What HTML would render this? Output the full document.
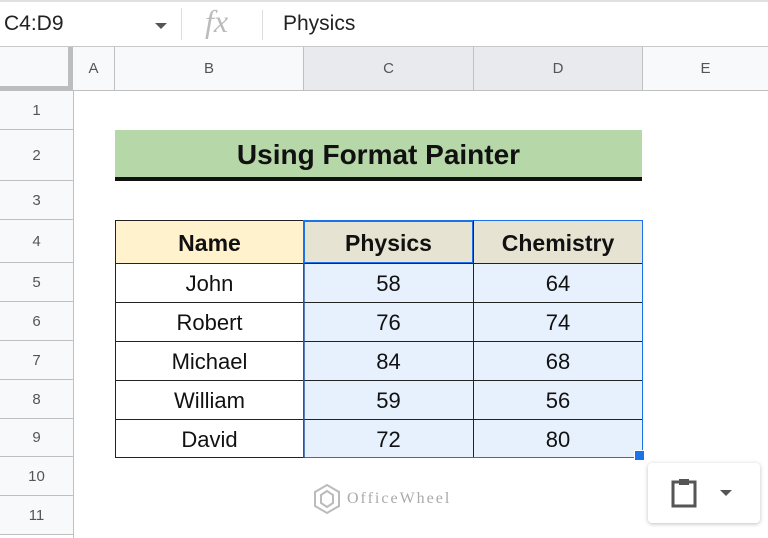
<!DOCTYPE html>
<html><head><style>
body{margin:0;width:768px;height:538px;overflow:hidden;background:#fff;font-family:"Liberation Sans",Arial,sans-serif;position:relative}
div{position:absolute;box-sizing:border-box}
.ch{top:47px;height:44px;background:#f8f9fa;border-right:1px solid #c0c0c0;border-bottom:1px solid #c0c0c0;text-align:center;line-height:44px;font-size:15px;color:#555}
.sel{background:#e8eaed}
.rh{left:0;width:73px;background:#f8f9fa;border-bottom:1px solid #c0c0c0;text-align:center;font-size:15px;color:#555}
.c{border:1px solid #222;text-align:center;font-size:22px;color:#111;margin:0}
</style></head><body>
<div style="left:0;top:0;width:768px;height:47px;border-top:2px solid #e0e0e0;border-bottom:1px solid #c8c8c8"></div>
<div style="left:4px;top:12px;font-size:21px;color:#222">C4:D9</div>
<div style="left:155px;top:23px;width:0;height:0;border-left:6px solid transparent;border-right:6px solid transparent;border-top:6px solid #555"></div>
<div style="left:181px;top:8px;width:1px;height:32px;background:#ddd"></div>
<div style="left:205px;top:3px;font-family:'Liberation Serif',serif;font-style:italic;font-size:32px;color:#bbb">fx</div>
<div style="left:262px;top:10px;width:1px;height:30px;background:#ddd"></div>
<div style="left:283px;top:12px;font-size:21px;color:#222">Physics</div>

<div style="left:0;top:47px;width:73px;height:44px;background:#f8f9fa;border-right:5px solid #bdbdbd;border-bottom:5px solid #bdbdbd"></div>
<div class="ch" style="left:73px;width:42px">A</div>
<div class="ch" style="left:115px;width:189px">B</div>
<div class="ch sel" style="left:304px;width:170px">C</div>
<div class="ch sel" style="left:474px;width:169px">D</div>
<div class="ch" style="left:643px;width:125px;border-right:none">E</div>
<div style="left:73px;top:91px;width:1px;height:447px;background:#c0c0c0"></div>

<div class="rh" style="top:91px;height:39px;line-height:39px">1</div>
<div class="rh" style="top:130px;height:51px;line-height:51px">2</div>
<div class="rh" style="top:181px;height:39px;line-height:39px">3</div>
<div class="rh sel" style="top:220px;height:43px;line-height:43px">4</div>
<div class="rh sel" style="top:263px;height:39px;line-height:39px">5</div>
<div class="rh sel" style="top:302px;height:39px;line-height:39px">6</div>
<div class="rh sel" style="top:341px;height:39px;line-height:39px">7</div>
<div class="rh sel" style="top:380px;height:39px;line-height:39px">8</div>
<div class="rh sel" style="top:419px;height:38px;line-height:38px">9</div>
<div class="rh" style="top:457px;height:39px;line-height:39px">10</div>
<div class="rh" style="top:496px;height:39px;line-height:39px">11</div>

<div style="left:115px;top:130px;width:527px;height:51px;background:#b6d7a8;border-bottom:4px solid #111;text-align:center;font-weight:bold;font-size:28px;line-height:50px;color:#111">Using Format Painter</div>

<div class="c" style="left:115px;top:220px;width:189px;height:44px;background:#fff2cc;font-weight:bold;line-height:44px;font-size:23px">Name</div>
<div class="c" style="left:303px;top:220px;width:171px;height:44px;background:#e6e3d2;font-weight:bold;line-height:42px;font-size:23px;border:2px solid #1a73e8">Physics</div>
<div class="c" style="left:473px;top:220px;width:170px;height:44px;background:#e6e3d2;font-weight:bold;line-height:44px;font-size:23px;border-right:1px solid #1a73e8;border-top:1px solid #1a73e8">Chemistry</div>

<div class="c" style="left:115px;top:263px;width:189px;height:40px;line-height:40px">John</div>
<div class="c" style="left:303px;top:263px;width:171px;height:40px;line-height:40px;background:#e7f0fd">58</div>
<div class="c" style="left:473px;top:263px;width:170px;height:40px;line-height:40px;background:#e7f0fd">64</div>
<div class="c" style="left:115px;top:302px;width:189px;height:40px;line-height:40px">Robert</div>
<div class="c" style="left:303px;top:302px;width:171px;height:40px;line-height:40px;background:#e7f0fd">76</div>
<div class="c" style="left:473px;top:302px;width:170px;height:40px;line-height:40px;background:#e7f0fd">74</div>
<div class="c" style="left:115px;top:341px;width:189px;height:40px;line-height:40px">Michael</div>
<div class="c" style="left:303px;top:341px;width:171px;height:40px;line-height:40px;background:#e7f0fd">84</div>
<div class="c" style="left:473px;top:341px;width:170px;height:40px;line-height:40px;background:#e7f0fd">68</div>
<div class="c" style="left:115px;top:380px;width:189px;height:40px;line-height:40px">William</div>
<div class="c" style="left:303px;top:380px;width:171px;height:40px;line-height:40px;background:#e7f0fd">59</div>
<div class="c" style="left:473px;top:380px;width:170px;height:40px;line-height:40px;background:#e7f0fd">56</div>
<div class="c" style="left:115px;top:419px;width:189px;height:39px;line-height:39px">David</div>
<div class="c" style="left:303px;top:419px;width:171px;height:39px;line-height:39px;background:#e7f0fd">72</div>
<div class="c" style="left:473px;top:419px;width:170px;height:39px;line-height:39px;background:#e7f0fd">80</div>
<div style="left:303px;top:263px;width:340px;height:195px;border:1px solid #1a73e8;border-top:none"></div>
<div style="left:303px;top:263px;width:2px;height:195px;background:#1a4f9e;opacity:.7"></div>
<div style="left:634px;top:450px;width:11px;height:11px;background:#1a73e8;border:1px solid #fff"></div>

<div style="left:313px;top:483px;width:28px;height:32px">
<svg width="28" height="32" viewBox="0 0 28 32"><path d="M14 2 L26 9 L26 23 L14 30 L2 23 L2 9 Z" fill="none" stroke="#bbb" stroke-width="2"/><path d="M8 12 L14 8 L20 12 L20 20 L14 24 L8 20 Z" fill="none" stroke="#bbb" stroke-width="2"/></svg></div>
<div style="left:347px;top:490px;font-family:'Liberation Serif',serif;font-size:16px;letter-spacing:2px;color:#aaa">OfficeWheel</div>

<div style="left:648px;top:463px;width:112px;height:60px;background:#fff;border-radius:4px;box-shadow:0 1px 4px rgba(0,0,0,.25)">
<svg style="position:absolute;left:22px;top:14px" width="28" height="32" viewBox="0 0 28 32"><rect x="3" y="5" width="22" height="24" fill="none" stroke="#555" stroke-width="3"/><rect x="9" y="2" width="10" height="6" fill="#555"/></svg>
<div style="left:72px;top:27px;width:0;height:0;border-left:6px solid transparent;border-right:6px solid transparent;border-top:6px solid #555"></div>
</div>
</body></html>
